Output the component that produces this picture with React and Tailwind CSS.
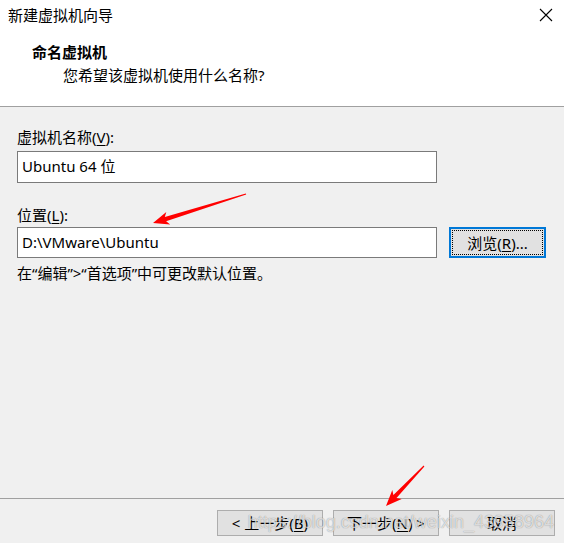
import React from 'react';

const font = { fontFamily: '"Noto Sans", "Noto Sans CJK SC", sans-serif' };

// tapered red arrow as polygon points, tip first
function arrowPoints(tail, tip) {
  const dx = tail[0] - tip[0], dy = tail[1] - tip[1];
  const len = Math.hypot(dx, dy);
  const u = [dx / len, dy / len];
  const n = [u[1], -u[0]];
  const hl = 16, hw = 6.5, sw = 2.2, tw = 0.6;
  const b = [tip[0] + u[0] * hl, tip[1] + u[1] * hl];
  const p = (c, k) => `${(c[0] + n[0] * k).toFixed(1)},${(c[1] + n[1] * k).toFixed(1)}`;
  const bi = [tip[0] + u[0] * (hl - 3), tip[1] + u[1] * (hl - 3)];
  return [
    `${tip[0]},${tip[1]}`,
    p(b, hw), p(bi, sw), p(tail, tw), p(tail, -tw), p(bi, -sw), p(b, -hw),
  ].join(' ');
}

function Btn({ children }) {
  return (
    <button className="w-[106px] h-[26px] bg-[#e1e1e1] border border-[#adadad] text-[15px] leading-[20px] text-black flex items-center justify-center">
      {children}
    </button>
  );
}

export default function App() {
  return (
    <div className="relative w-[564px] h-[543px] bg-[#f0f0f0] flex flex-col overflow-hidden text-black" style={font}>
      {/* header */}
      <div className="h-[107px] bg-white border-b border-[#a0a0a0] flex flex-col shrink-0">
        <div className="flex justify-between items-start pt-[5px] pl-[8px] pr-[11px]">
          <span className="text-[15px] leading-[20px]">新建虚拟机向导</span>
          <svg width="14" height="14" viewBox="0 0 14 14" className="mt-[3px]">
            <path d="M1 1L13 13M13 1L1 13" stroke="#000" strokeWidth="1.1" />
          </svg>
        </div>
        <div className="pl-[32px] mt-[17px] text-[15px] leading-[20px] font-bold">命名虚拟机</div>
        <div className="pl-[63px] mt-[3px] text-[15px] leading-[20px]">您希望该虚拟机使用什么名称?</div>
      </div>

      {/* body */}
      <div className="flex-1 px-[17px] pt-[20px] text-[15px] leading-[20px]">
        <div>虚拟机名称(<span className="underline underline-offset-2">V</span>):</div>
        <div className="mt-[4px] w-[420px] h-[32px] bg-white border border-[#7a7a7a] px-[4px] pt-[4px]">Ubuntu 64 位</div>

        <div className="mt-[22px]">位置(<span className="underline underline-offset-2">L</span>):</div>
        <div className="mt-[2px] flex items-start">
          <div className="w-[420px] h-[31px] bg-white border border-[#7a7a7a] px-[4px] pt-[4px]">D:\VMware\Ubuntu</div>
          <button className="ml-[12px] w-[97px] h-[31px] bg-[#e1e1e1] border-2 border-[#0078d7] p-[1px] flex">
            <span className="flex-1 border border-dotted border-black flex items-center justify-center">
              浏览(<span className="underline underline-offset-2">R</span>)...
            </span>
          </button>
        </div>
        <div className="mt-[5px]">在“编辑”&gt;“首选项”中可更改默认位置。</div>
      </div>

      {/* footer */}
      <div className="h-[45px] border-t border-[#a0a0a0] shrink-0 flex justify-end items-start pt-[11px] pr-[9px] gap-[10px]">
        <Btn>&lt; 上一步(<span className="underline underline-offset-2">B</span>)</Btn>
        <Btn>下一步(<span className="underline underline-offset-2">N</span>) &gt;</Btn>
        <Btn>取消</Btn>
      </div>

      {/* watermark */}
      <div
        className="absolute right-[10px] top-[510px] text-[18px] leading-[24px] text-white/70 [text-shadow:0_0_1px_rgba(0,0,0,0.45)] pointer-events-none whitespace-nowrap"
        style={{ fontFamily: '"Liberation Sans", Arial, sans-serif' }}
      >
        https://blog.csdn.net/weixin_43958964
      </div>

      {/* red arrows */}
      <svg className="absolute left-0 top-0 pointer-events-none" width="564" height="543">
        <polygon points={arrowPoints([246, 194], [153, 223])} fill="#ff0000" />
        <polygon points={arrowPoints([424, 466], [386, 506])} fill="#ff0000" />
      </svg>
    </div>
  );
}
